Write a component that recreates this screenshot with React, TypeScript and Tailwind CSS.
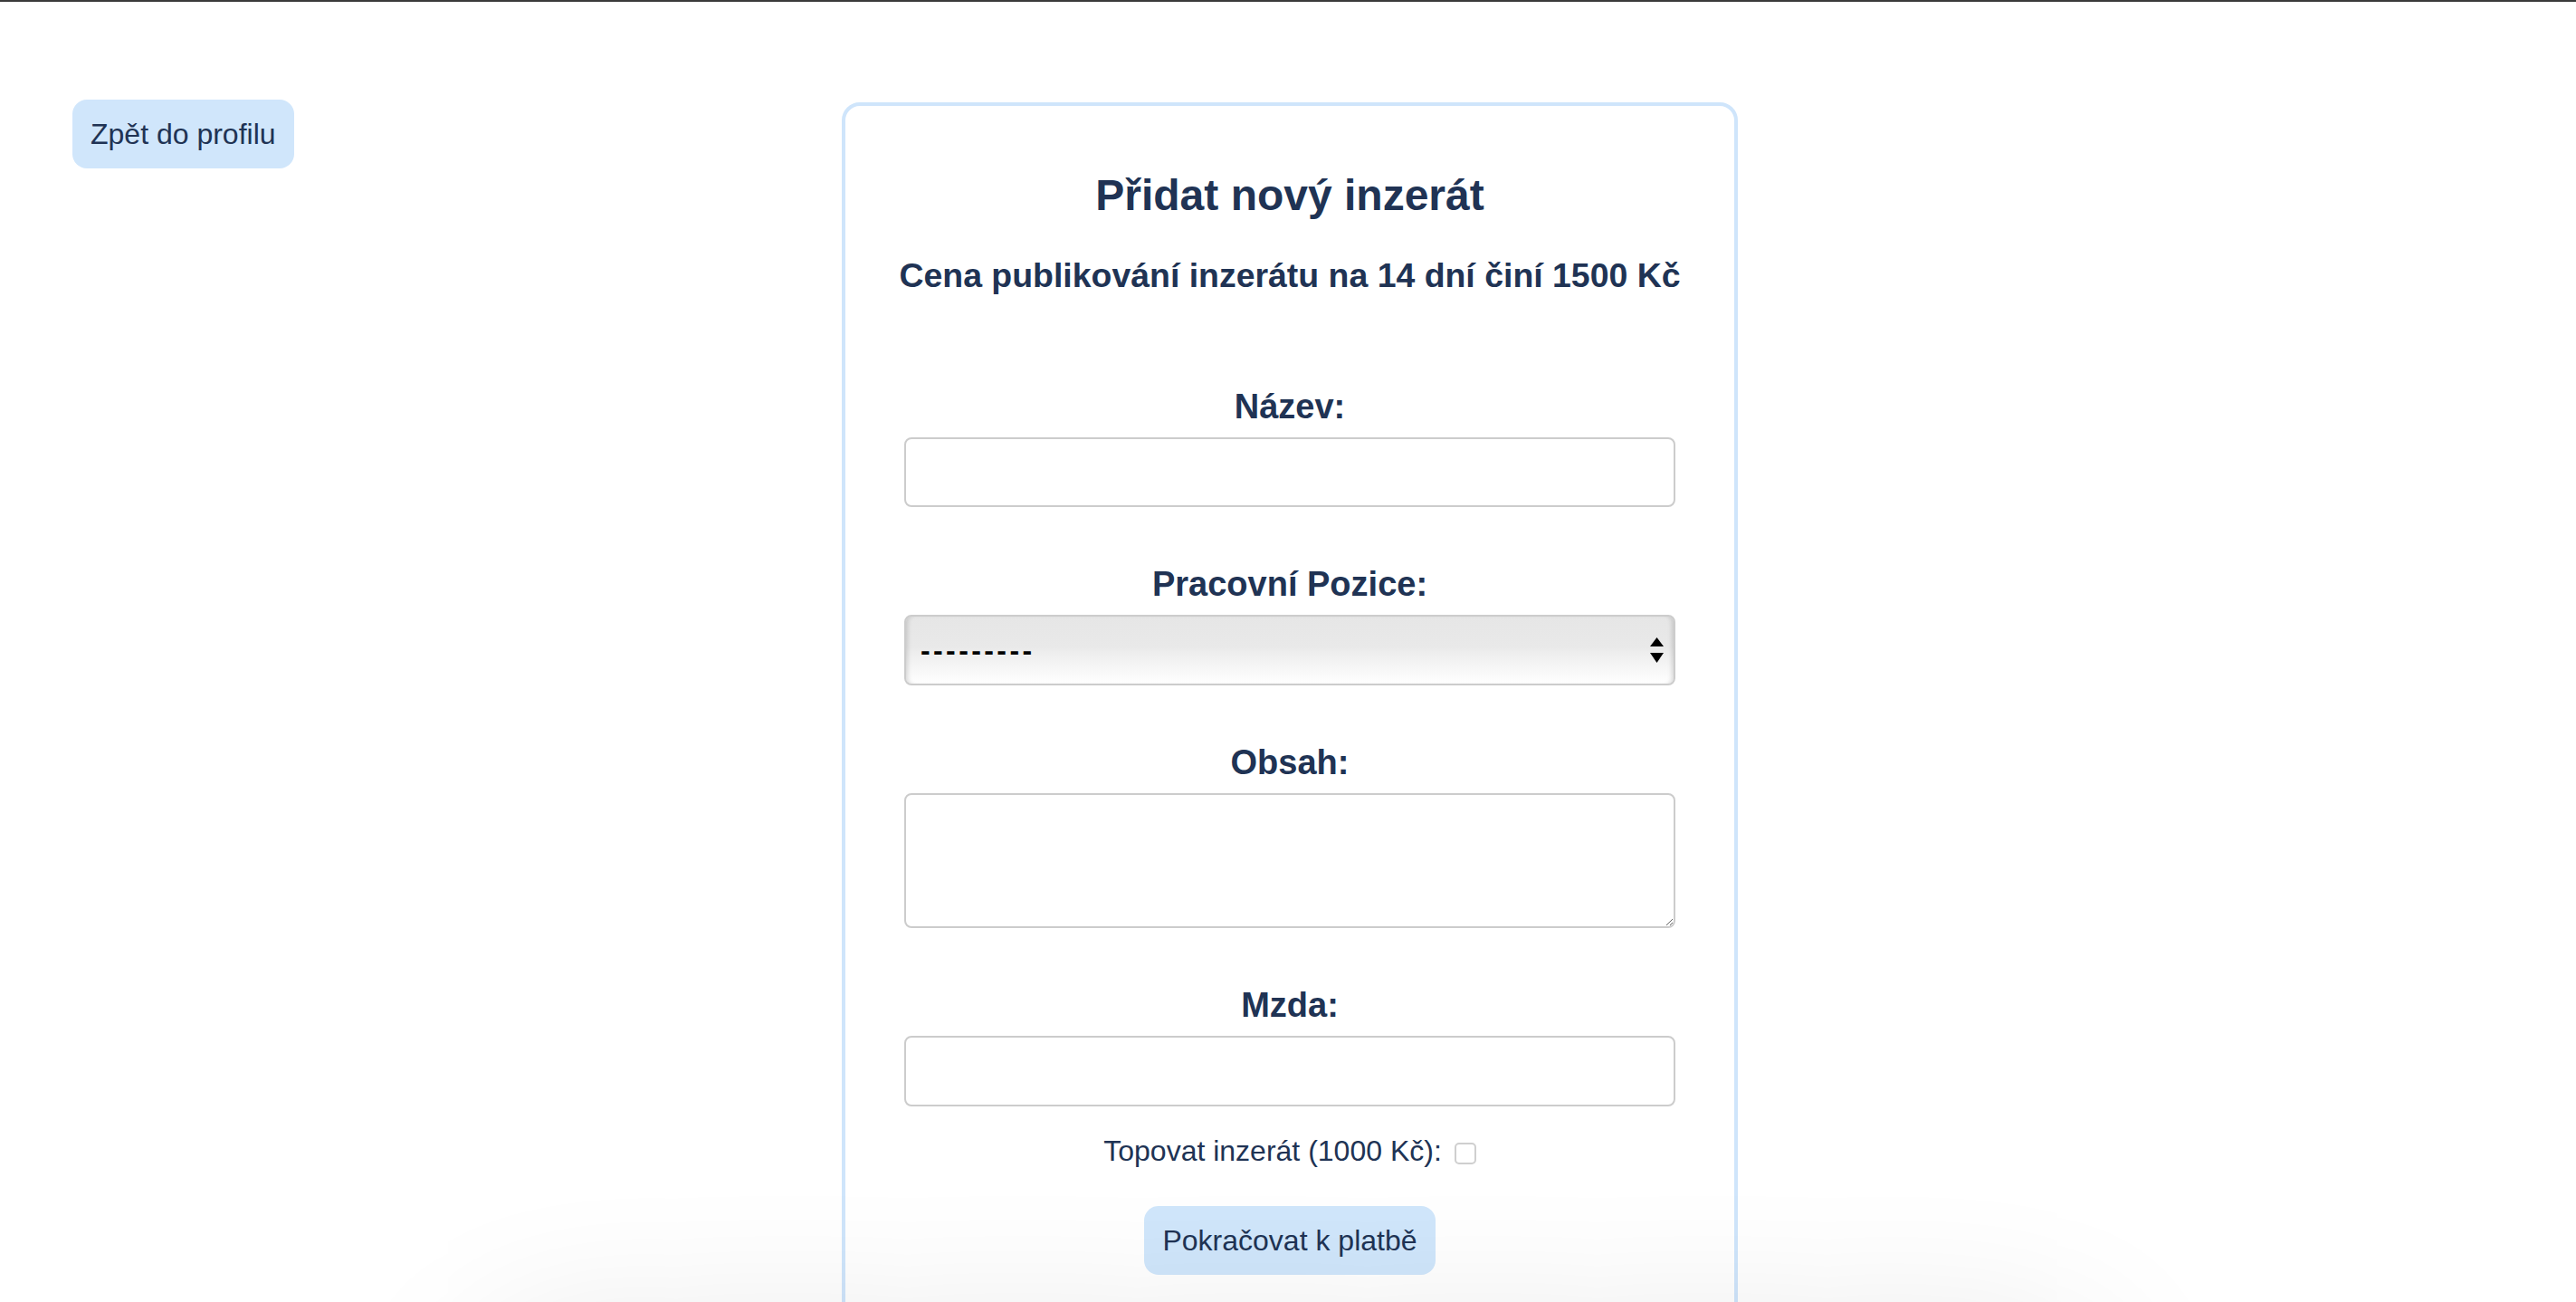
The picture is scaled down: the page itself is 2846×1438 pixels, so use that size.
export default function App() {
  return (
    <div className="relative min-h-screen overflow-hidden border-t-2 border-[#3a3a3a] bg-white font-['Liberation_Sans',Arial,sans-serif] text-[#203354]">
      <div className="grid grid-cols-[930px_990px_1fr] pt-[108px]">
        <div className="pl-[80px]">
          <button className="rounded-[16px] bg-[#d0e6fb] px-[20px] py-[20px] text-[32px] leading-[36px] text-[#203354]">
            Zpět do profilu
          </button>
        </div>
        <div className="mt-[3px] rounded-[20px] border-4 border-[#cfe5fb] pt-[71px] pb-[120px]">
          <h2 className="text-center text-[48px] font-bold leading-[55px]">Přidat nový inzerát</h2>
          <h3 className="mt-[40px] text-center text-[37.44px] font-bold leading-[43px]">
            Cena publikování inzerátu na 14 dní činí 1500 Kč
          </h3>
          <form className="mx-auto mt-[101px] flex w-[852px] flex-col">
            <label className="text-center text-[38px] font-bold leading-[44px]">Název:</label>
            <input
              type="text"
              className="mt-[12px] h-[77px] w-full rounded-[8px] border-2 border-[#cccccc] bg-white px-[16px] text-[32px] outline-none"
            />

            <label className="mt-[63px] text-center text-[38px] font-bold leading-[44px]">Pracovní Pozice:</label>
            <div className="relative mt-[12px]">
              <select className="h-[78px] w-full appearance-none rounded-[8px] border-2 border-[#cccccc] bg-[linear-gradient(to_bottom,#e6e6e6_0%,#e9e9e9_46%,#eeeeee_54%,#ffffff_100%)] pl-[16px] text-[32px] font-bold tracking-[3.4px] text-black shadow-[inset_5px_0_5px_-3px_rgba(0,0,0,0.14),inset_-5px_0_5px_-3px_rgba(0,0,0,0.14)] outline-none">
                <option>---------</option>
              </select>
              <svg
                className="pointer-events-none absolute right-[12px] top-[25px]"
                width="17"
                height="29"
                viewBox="0 0 17 29"
              >
                <path d="M8.5 0 L16 10 L1 10 Z" fill="#000" />
                <path d="M1 17 L16 17 L8.5 28 Z" fill="#000" />
              </svg>
            </div>

            <label className="mt-[63px] text-center text-[38px] font-bold leading-[44px]">Obsah:</label>
            <textarea className="mt-[12px] h-[149px] w-full rounded-[8px] border-2 border-[#cccccc] bg-white px-[16px] text-[32px] outline-none" />

            <label className="mt-[63px] text-center text-[38px] font-bold leading-[44px]">Mzda:</label>
            <input
              type="text"
              className="mt-[12px] h-[78px] w-full rounded-[8px] border-2 border-[#cccccc] bg-white px-[16px] text-[32px] outline-none"
            />

            <div className="mt-[31px] flex items-center justify-center text-[32px] leading-[37px]">
              <span>Topovat inzerát (1000 Kč):</span>
              <input
                type="checkbox"
                className="ml-[14px] mt-[4px] h-[24px] w-[24px] appearance-none rounded-[5px] border-2 border-[#cfcfcf] bg-white"
              />
            </div>

            <div className="mt-[42px] flex justify-center">
              <button
                type="button"
                className="rounded-[16px] bg-[#d0e6fb] px-[20px] py-[20px] text-[32px] leading-[36px] text-[#203354]"
              >
                Pokračovat k platbě
              </button>
            </div>
          </form>
        </div>
        <div />
      </div>
      <div className="pointer-events-none fixed left-[560px] top-[1530px] h-[300px] w-[1726px] rounded-[60px] shadow-[0_0_180px_50px_rgba(0,0,0,0.12)]" />
    </div>
  );
}
